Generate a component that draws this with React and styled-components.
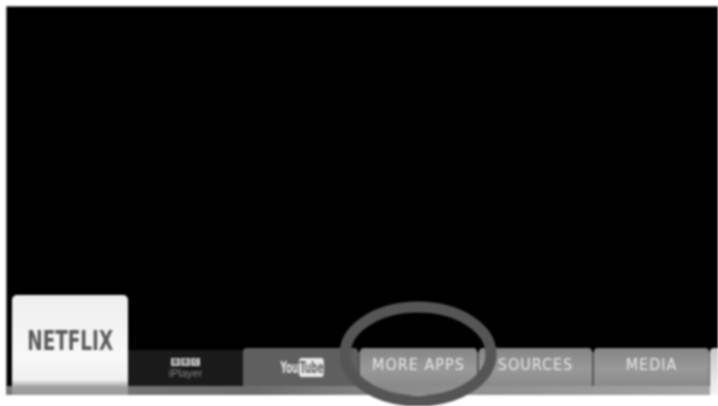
import React from 'react';
import styled, { createGlobalStyle } from 'styled-components';

const GlobalStyle = createGlobalStyle`
    html, body {
        margin: 0;
        padding: 0;
        background: #fff;
    }
`;

const tiles = [
    { label: 'MORE APPS', width: 117, gap: 2 },
    { label: 'SOURCES', width: 113, gap: 2 },
    { label: 'MEDIA', width: 115, gap: 1 },
];

const App = () => {
    return (
        <Page>
            <GlobalStyle />
            <Screen>
                <Launcher>
                    <NetflixTile>
                        <NetflixLogo>NETFLIX</NetflixLogo>
                    </NetflixTile>
                    <IplayerTile>
                        <BbcBlocks>
                            <BbcBlock>B</BbcBlock>
                            <BbcBlock>B</BbcBlock>
                            <BbcBlock>C</BbcBlock>
                        </BbcBlocks>
                        <IplayerLabel>iPlayer</IplayerLabel>
                    </IplayerTile>
                    <YoutubeTile>
                        <YoutubeLogo>
                            <YouLabel>You</YouLabel>
                            <TubeLabel>Tube</TubeLabel>
                        </YoutubeLogo>
                    </YoutubeTile>
                    {tiles.map((tile) => (
                        <TextTile key={tile.label} $width={tile.width} $gap={tile.gap}>
                            {tile.label}
                        </TextTile>
                    ))}
                    <EdgeTile />
                </Launcher>
                <Strip />
            </Screen>
            <Circle viewBox="0 0 160 112" aria-hidden="true">
                <ellipse cx="78" cy="54" rx="73" ry="47" fill="none" stroke="#555" strokeWidth="11" />
            </Circle>
        </Page>
    );
};

export default App;

const Page = styled.div`
    position: relative;
    width: 718px;
    height: 406px;
    padding: 6px 0 11px 6px;
    box-sizing: border-box;
    overflow: hidden;
    background: #fff;
    filter: blur(0.8px);
`;

const Screen = styled.div`
    position: relative;
    height: 100%;
    padding-left: 6px;
    box-sizing: border-box;
    background: #000;
    box-shadow: inset 0 1px 0 #666, inset 1px 0 0 #666;
    display: flex;
    flex-direction: column;
    justify-content: flex-end;
    overflow: hidden;
    font-family: "Liberation Sans", Arial, sans-serif;
`;

const Launcher = styled.div`
    display: flex;
    align-items: flex-end;
    height: 91px;
    position: relative;
    z-index: 1;
    background: linear-gradient(#555, #555) bottom / 100% 34px no-repeat;
`;

const Strip = styled.div`
    height: 9px;
    margin-left: -6px;
    background: linear-gradient(90deg, #7a7a7a 0%, #6c6c6c 35%, #8a8a8a 55%, #a6a6a6 100%);
`;

const NetflixTile = styled.div`
    width: 116px;
    height: 100px;
    margin-bottom: -9px;
    flex-shrink: 0;
    border-radius: 5px 5px 0 0;
    background: linear-gradient(180deg, #eeeeee 0%, #f8f8f8 60%, #f0f0f0 85%, #a0a0a0 92%, #9a9a9a 100%);
    display: flex;
    align-items: flex-start;
    justify-content: center;
    padding-top: 33px;
    box-sizing: border-box;
`;

const NetflixLogo = styled.span`
    color: #5a5a5a;
    font-family: "DejaVu Sans Condensed", sans-serif;
    font-size: 22px;
    font-weight: 700;
    line-height: 28px;
    transform: scale(0.93, 1.2);
`;

const IplayerTile = styled.div`
    width: 115px;
    height: 36px;
    flex-shrink: 0;
    background: #1a1a1a;
    display: flex;
    flex-direction: column;
    align-items: center;
    justify-content: center;
    gap: 2px;
`;

const BbcBlocks = styled.div`
    display: flex;
    gap: 1px;
`;

const BbcBlock = styled.span`
    width: 9px;
    height: 8px;
    background: #c4c4c4;
    color: #333;
    font-size: 7px;
    font-weight: 700;
    line-height: 8px;
    text-align: center;
`;

const IplayerLabel = styled.span`
    color: #858585;
    font-size: 11px;
    line-height: 11px;
`;

const YoutubeTile = styled.div`
    width: 115px;
    height: 38px;
    margin-right: 2px;
    flex-shrink: 0;
    box-sizing: border-box;
    border-radius: 4px 4px 0 0;
    background: #5f5f5f;
    display: flex;
    align-items: center;
    justify-content: center;
    padding-left: 3px;
`;

const YoutubeLogo = styled.span`
    display: flex;
    align-items: center;
    gap: 1px;
    font-family: "DejaVu Sans Condensed", sans-serif;
    font-weight: 700;
    font-size: 16px;
    transform: scale(0.62, 1);
`;

const YouLabel = styled.span`
    color: #e6e6e6;
`;

const TubeLabel = styled.span`
    padding: 0 1px;
    border-radius: 4px;
    background: #e8e8e8;
    color: #666;
`;

const TextTile = styled.div`
    width: ${(props) => props.$width}px;
    height: 38px;
    margin-right: ${(props) => props.$gap}px;
    flex-shrink: 0;
    box-sizing: border-box;
    border-radius: 4px 4px 0 0;
    background: linear-gradient(180deg, #858585 0%, #999 55%, #8a8a8a 100%);
    display: flex;
    align-items: center;
    justify-content: center;
    padding-bottom: 5px;
    color: #e8e8e8;
    font-size: 16px;
    letter-spacing: 1px;
    font-family: "DejaVu Sans Condensed", "Open Sans", sans-serif;
`;

const EdgeTile = styled.div`
    width: 12px;
    height: 47px;
    margin-bottom: -9px;
    flex-shrink: 0;
    border-radius: 4px 0 0 0;
    background: linear-gradient(180deg, #c8c8c8 0%, #e4e4e4 60%, #f4f4f4 100%);
`;

const Circle = styled.svg`
    position: absolute;
    left: 340px;
    top: 300px;
    width: 160px;
    height: 112px;
    z-index: 2;
`;
